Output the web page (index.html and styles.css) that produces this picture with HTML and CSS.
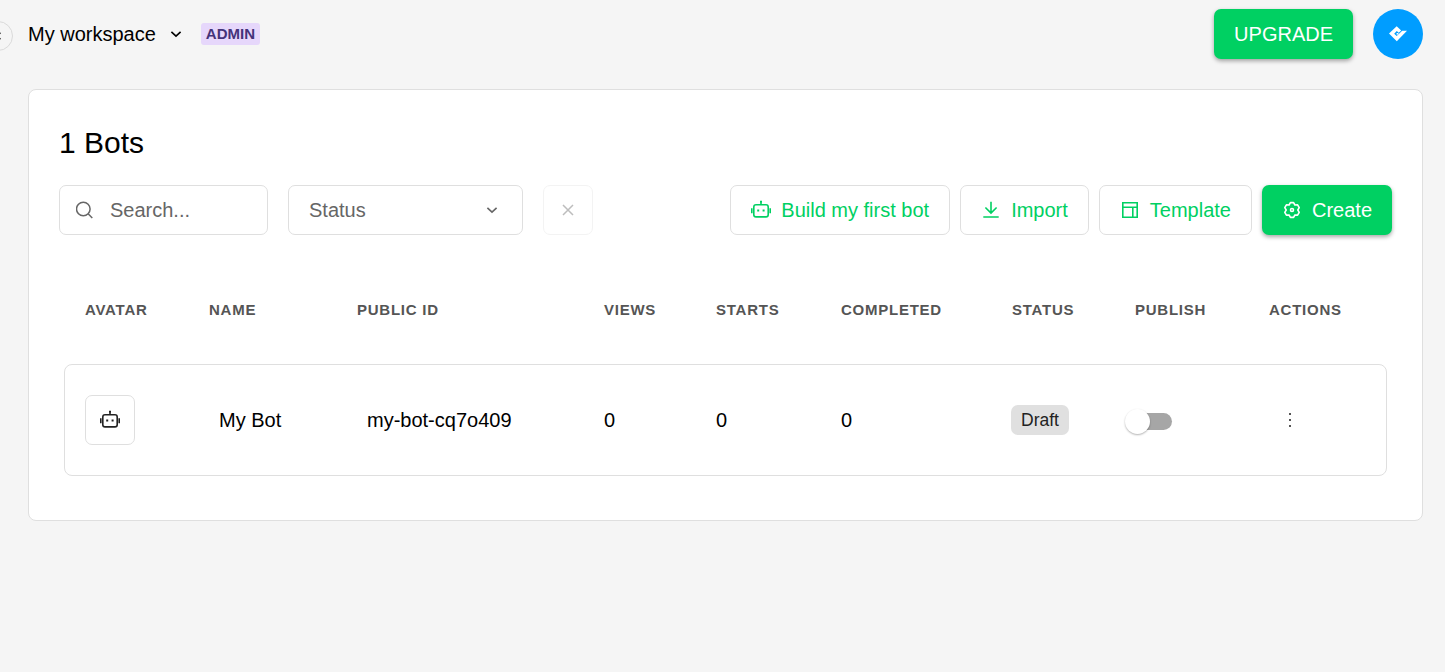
FILE: index.html
```html
<!DOCTYPE html>
<html lang="en">
<head>
    <meta charset="UTF-8">
    <meta name="viewport" content="width=device-width, initial-scale=1.0">
    <title>My workspace - Bots</title>
    <link rel="stylesheet" href="styles.css">
</head>
<body>

    <!-- shared icons -->
    <svg class="sprite" width="0" height="0">
        <symbol id="icon-chevron" viewBox="0 0 12 12">
            <path d="M1.4 3.8 6 8.2l4.6-4.4" fill="none" stroke="currentColor" stroke-width="1.6"/>
        </symbol>
        <symbol id="icon-bot" viewBox="0 0 20 20">
            <g fill="none" stroke="currentColor" stroke-width="1.6">
                <rect x="2.8" y="4.7" width="14.4" height="12.2" rx="2.2"/>
                <path d="M10 4.5V1M.8 8.3v5M19.2 8.3v5"/>
            </g>
            <path d="M9 .7h2v1.8H9zM6.2 9.6h2v2h-2zM11.6 9.6h2v2h-2z" fill="currentColor"/>
        </symbol>
    </svg>

    <header class="topbar">
        <button class="collapse-button" aria-label="Toggle sidebar">
            <svg width="8" height="8" viewBox="0 0 8 8"><path d="M6.5.8 3.1 4l3.4 3.2" fill="none" stroke="currentColor" stroke-width="1.4"/></svg>
        </button>
        <div class="workspace">
            <span>My workspace</span>
            <svg class="chevron" width="12" height="12"><use href="#icon-chevron"/></svg>
        </div>
        <span class="role-badge">ADMIN</span>
        <button class="button button-primary upgrade-button">UPGRADE</button>
        <div class="user-avatar">
            <svg width="18" height="16" viewBox="0 0 18 16">
                <path fill="#fff" d="M0 7.6 7.7.2l4.5 4.2-2.5 2.4L7.8 5.1 5.2 7.7l2.5 2.4 5.5-5.3H18L7.8 15.3z"/>
                <path fill="#fff" d="M7.6 7h1.8v1.6H7.6z"/>
            </svg>
        </div>
    </header>

    <main class="panel">
        <h1>1 Bots</h1>

        <div class="toolbar">
            <label class="search">
                <svg width="18" height="18" viewBox="0 0 18 18" fill="none" stroke="currentColor" stroke-width="1.5">
                    <circle cx="7.3" cy="8" r="6.8"/>
                    <path d="m12.1 12.8 4.2 4.2"/>
                </svg>
                <input type="text" placeholder="Search...">
            </label>
            <div class="status-filter">
                <span>Status</span>
                <svg width="12" height="12"><use href="#icon-chevron"/></svg>
            </div>
            <button class="button clear-button" aria-label="Clear filters" disabled>
                <svg width="12" height="12" viewBox="0 0 12 12"><path d="m1 1 10 10M11 1 1 11" stroke="currentColor" stroke-width="1.5"/></svg>
            </button>

            <div class="toolbar-actions">
                <button class="button">
                    <svg width="20" height="20"><use href="#icon-bot"/></svg>
                    Build my first bot
                </button>
                <button class="button">
                    <svg width="20" height="20" viewBox="0 0 20 20" fill="none" stroke="currentColor" stroke-width="1.6">
                        <path d="M10 1.7v11M4.4 7.5l5.6 5.6 5.6-5.6M2.3 17h15.4"/>
                    </svg>
                    Import
                </button>
                <button class="button">
                    <svg width="20" height="20" viewBox="0 0 20 20" fill="none" stroke="currentColor" stroke-width="1.6">
                        <path d="M2.8 2.8h14.4v14.4H2.8zM2.8 7.3h14.4M12.8 7.3v9.9"/>
                    </svg>
                    Template
                </button>
                <button class="button button-primary">
                    <svg width="20" height="20" viewBox="0 0 20 20" fill="none" stroke="currentColor" stroke-width="1.6">
                        <path stroke-linejoin="round" d="M8.4 2.6h3.2l1.3 2.4 2.7-.1 1.6 2.8-1.4 2.3 1.4 2.3-1.6 2.8-2.7-.1-1.3 2.4H8.4L7.1 15l-2.7.1-1.6-2.8L4.2 10 2.8 7.7l1.6-2.8 2.7.1z"/>
                        <circle cx="10" cy="10" r="1.5"/>
                    </svg>
                    Create
                </button>
            </div>
        </div>

        <div class="bots">
            <div class="bots-row bots-head">
                <span>Avatar</span>
                <span>Name</span>
                <span>Public ID</span>
                <span>Views</span>
                <span>Starts</span>
                <span>Completed</span>
                <span>Status</span>
                <span>Publish</span>
                <span>Actions</span>
            </div>
            <div class="bots-row bot">
                <div class="bot-avatar"><svg width="20" height="20"><use href="#icon-bot"/></svg></div>
                <span class="bot-text">My Bot</span>
                <span class="bot-text">my-bot-cq7o409</span>
                <span>0</span>
                <span>0</span>
                <span>0</span>
                <div><span class="status-tag">Draft</span></div>
                <div class="switch" role="switch" aria-checked="false"><span class="switch-thumb"></span></div>
                <div class="bot-menu">
                    <svg width="4" height="14" viewBox="0 0 4 14" fill="currentColor">
                        <rect x="1" y="0" width="2" height="2"/>
                        <rect x="1" y="6" width="2" height="2"/>
                        <rect x="1" y="12" width="2" height="2"/>
                    </svg>
                </div>
            </div>
        </div>
    </main>

</body>
</html>
```
FILE: styles.css
```css
:root {
    --green: #00d062;
    --border: #dfdfdf;
    --muted: #666;
    --bg: #f5f5f5;
}

* {
    box-sizing: border-box;
}

body {
    margin: 0;
    min-height: 100vh;
    background: var(--bg);
    color: #000;
    font-family: "Liberation Sans", Arial, sans-serif;
    font-size: 20px;
    overflow-x: hidden;
}

svg {
    flex-shrink: 0;
}

.sprite {
    display: block;
}

.topbar {
    display: flex;
    align-items: center;
    height: 68px;
    padding-right: 22px;
}

.collapse-button {
    display: flex;
    align-items: center;
    justify-content: center;
    width: 30px;
    height: 30px;
    margin: 4px 15px 0 -17px;
    padding: 0;
    border: 1px solid #dadada;
    border-radius: 50%;
    background: var(--bg);
    color: #222;
}

.workspace {
    display: flex;
    align-items: center;
    gap: 14px;
}

.role-badge {
    margin-left: 19px;
    padding: 0 5px;
    border-radius: 3px;
    background: #e6d7fb;
    color: #44337a;
    font-size: 15px;
    font-weight: 700;
    line-height: 22px;
}

.button {
    display: flex;
    align-items: center;
    gap: 10px;
    height: 50px;
    padding: 0 20px;
    border: 1px solid var(--border);
    border-radius: 7px;
    background: #fff;
    color: var(--green);
    font: inherit;
    white-space: nowrap;
}

.button-primary {
    border: 0;
    background: var(--green);
    color: #fff;
    box-shadow: 0 2px 4px rgba(0, 0, 0, 0.35);
}

.upgrade-button {
    margin-left: auto;
}

.user-avatar {
    display: flex;
    align-items: center;
    justify-content: center;
    width: 50px;
    height: 50px;
    margin-left: 20px;
    border-radius: 50%;
    background: #009dff;
}

.panel {
    height: 432px;
    margin: 21px 22px 0 28px;
    padding: 35px 30px 0;
    border: 1px solid var(--border);
    border-radius: 8px;
    background: #fff;
}

h1 {
    margin: 0 0 25px;
    font-size: 30px;
    font-weight: 400;
    line-height: 35px;
}

.toolbar {
    display: flex;
    gap: 20px;
}

.search,
.status-filter {
    display: flex;
    align-items: center;
    height: 50px;
    border: 1px solid var(--border);
    border-radius: 7px;
    color: var(--muted);
}

.search {
    width: 209px;
    padding: 0 16px;
    gap: 16px;
}

.search input {
    width: 100%;
    min-width: 0;
    padding: 0;
    border: 0;
    outline: 0;
    background: none;
    font: inherit;
}

.search input::placeholder {
    color: var(--muted);
}

.status-filter {
    justify-content: space-between;
    width: 235px;
    padding: 0 24px 0 20px;
}

.clear-button {
    justify-content: center;
    width: 50px;
    padding: 0;
    color: #444;
    opacity: 0.35;
}

.toolbar-actions {
    display: flex;
    gap: 10px;
    margin-left: auto;
}

.bots {
    margin: 49px 5px 0;
}

.bots-row {
    display: grid;
    grid-template-columns: 124px 148px 247px 112px 125px 171px 123px 134px 1fr;
    align-items: center;
    padding-left: 20px;
    border: 1px solid transparent;
}

.bots-head {
    height: 50px;
    color: #555;
    font-size: 15px;
    font-weight: 700;
    letter-spacing: 0.75px;
    text-transform: uppercase;
}

.bot {
    height: 112px;
    margin-top: 30px;
    border-color: var(--border);
    border-radius: 8px;
}

.bot-avatar {
    display: flex;
    align-items: center;
    justify-content: center;
    width: 50px;
    height: 50px;
    border: 1px solid var(--border);
    border-radius: 7px;
    color: #222;
}

.bot-text {
    padding-left: 10px;
}

.status-tag {
    display: inline-block;
    margin-left: -1px;
    padding: 0 10px;
    border-radius: 7px;
    background: #e0e0e0;
    color: #222;
    font-size: 17.5px;
    line-height: 30px;
    vertical-align: top;
}

.switch {
    display: flex;
    align-items: center;
    width: 42px;
    height: 17px;
    margin: 3px 0 0 -5px;
    border-radius: 9px;
    background: #a6a6a6;
}

.switch-thumb {
    flex-shrink: 0;
    width: 25px;
    height: 25px;
    margin-left: -5px;
    border-radius: 50%;
    background: #fff;
    box-shadow: 0 1px 2px rgba(0, 0, 0, 0.3);
}

.bot-menu {
    display: flex;
    padding-left: 19px;
    color: #555;
}
```
